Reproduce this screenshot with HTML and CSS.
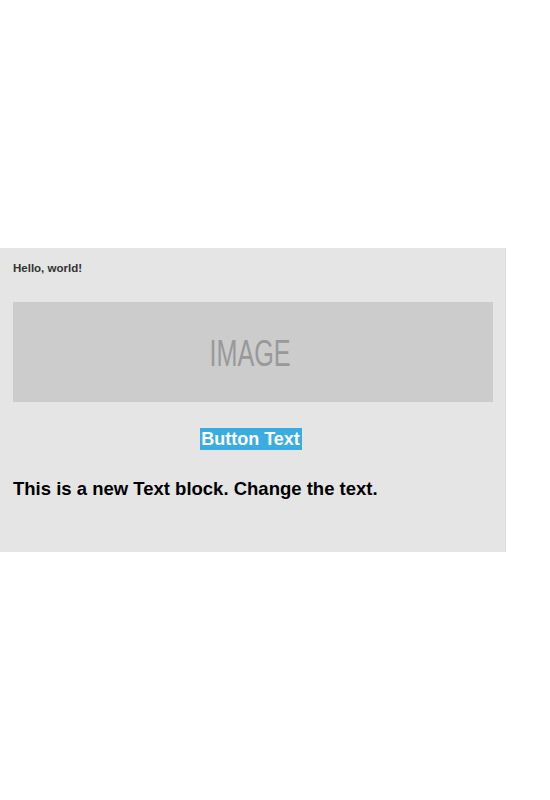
FILE: index.html
```html
<!DOCTYPE html>
<html>
<head>
<meta charset="utf-8">
<link rel="stylesheet" href="styles.css">
</head>
<body>
<div class="panel">
  <div class="hello">Hello, world!</div>
  <div class="image"><span class="image-label">IMAGE</span></div>
  <div class="btn-row"><span class="btn">Button Text</span></div>
  <div class="text-block">This is a new Text block. Change the text.</div>
</div>
</body>
</html>
```
FILE: styles.css
```css
html, body {
  margin: 0;
  padding: 0;
  background: #ffffff;
  font-family: "Liberation Sans", Arial, sans-serif;
}
body {
  padding-top: 248px;
}
.panel {
  box-sizing: border-box;
  width: 506px;
  height: 304px;
  padding: 12px 12px 0 13px;
  background: #e5e5e5;
  border-right: 1px solid #dcdcdc;
}
.hello {
  font-size: 11.5px;
  font-weight: bold;
  color: #333333;
  line-height: 16px;
}
.image {
  margin-top: 26px;
  height: 100px;
  background: #cccccc;
  display: flex;
  align-items: center;
  justify-content: center;
}
.image-label {
  display: inline-block;
  color: #999999;
  font-size: 36px;
  line-height: 36px;
  transform: scaleX(0.7);
  margin: 4px 6px 0 0;
}
.btn-row {
  margin-top: 26px;
  text-align: center;
}
.btn {
  display: inline-block;
  background: #3aade0;
  color: #ffffff;
  font-size: 18px;
  font-weight: bold;
  line-height: 22px;
  padding: 0 2px 0 1px;
  margin-right: 4px;
}
.text-block {
  margin-top: 28px;
  font-size: 18.5px;
  font-weight: bold;
  color: #000000;
  line-height: 22px;
}
```
